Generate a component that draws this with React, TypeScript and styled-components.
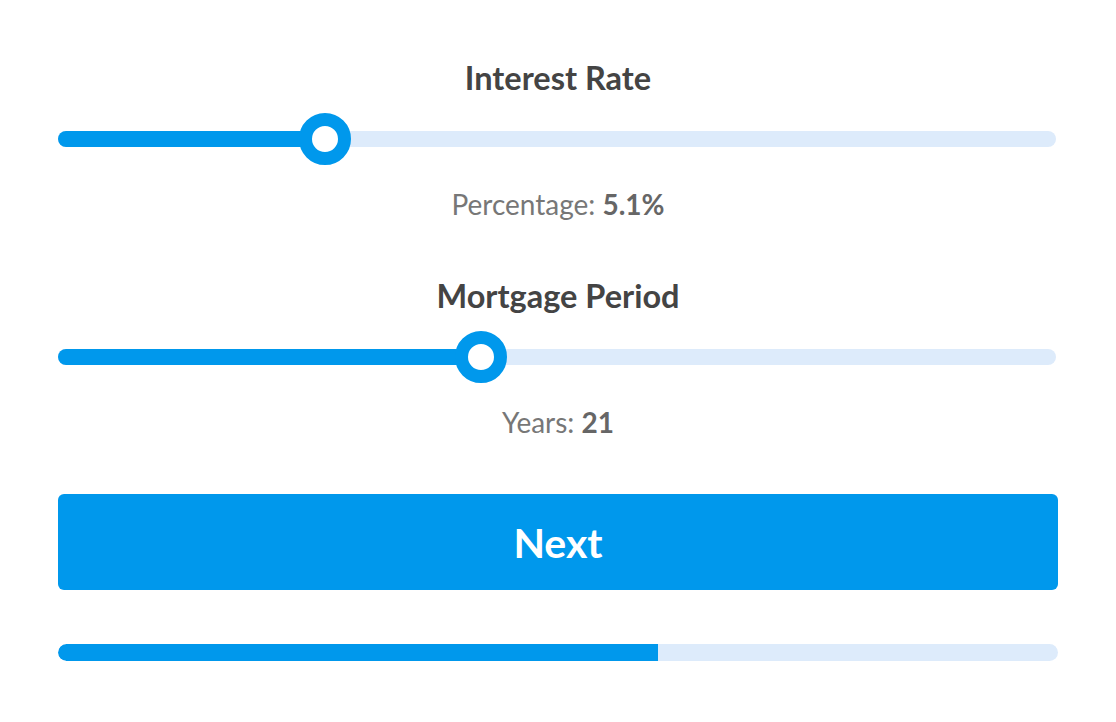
import styled, { createGlobalStyle } from 'styled-components';

const GlobalStyle = createGlobalStyle`
  body {
    margin: 0;
    background: #ffffff;
    font-family: Lato, "Open Sans", sans-serif;
  }
`;

const BLUE = '#0098ec';
const LIGHT = '#ddebfb';

const Page = styled.div`
  width: 1000px;
  margin: 0 auto;
  padding-top: 60px;
  display: flex;
  flex-direction: column;
`;

const Field = styled.section<{ $top?: number }>`
  display: flex;
  flex-direction: column;
  margin-top: ${(p) => p.$top ?? 0}px;
`;

const Title = styled.h2`
  margin: 0;
  text-align: center;
  font-size: 32.5px;
  line-height: 36px;
  font-weight: 700;
  color: #444444;
`;

const Track = styled.div`
  position: relative;
  margin-top: 35px;
  width: 998px;
  height: 16px;
  border-radius: 8px;
  background: ${LIGHT};
`;

const Fill = styled.div`
  height: 100%;
  border-radius: 8px;
  background: ${BLUE};
`;

const Thumb = styled.div`
  position: absolute;
  top: 50%;
  width: 52px;
  height: 52px;
  box-sizing: border-box;
  border-radius: 50%;
  border: 13px solid ${BLUE};
  background: #ffffff;
  transform: translate(-50%, -50%);
`;

const Caption = styled.p`
  margin: 42px 0 0;
  text-align: center;
  font-size: 28px;
  line-height: 30px;
  color: #777777;
  b {
    color: #666666;
    font-weight: 700;
  }
`;

const NextButton = styled.button`
  margin-top: 57px;
  height: 96px;
  width: 100%;
  border: none;
  border-radius: 6px;
  background: ${BLUE};
  color: #ffffff;
  font-family: Lato, "Open Sans", sans-serif;
  font-size: 41px;
  font-weight: 700;
  cursor: pointer;
`;

const Progress = styled.div`
  margin-top: 54px;
  height: 17px;
  border-radius: 9px;
  background: ${LIGHT};
  overflow: hidden;
`;

const ProgressFill = styled.div`
  height: 100%;
  background: ${BLUE};
  border-radius: 9px 0 0 9px;
`;

type SliderProps = { value: number; max: number };

const Slider = ({ value, max }: SliderProps) => {
  const p = value / max;
  const pos = `calc(26px + ${p} * (100% - 52px))`;
  return (
    <Track>
      <Fill style={{ width: pos }} />
      <Thumb style={{ left: pos }} />
    </Track>
  );
};

export default function App() {
  const rate = 5.1;
  const years = 21;
  const step = 0.6;

  return (
    <>
      <GlobalStyle />
      <Page>
        <Field>
          <Title>Interest Rate</Title>
          <Slider value={rate} max={20} />
          <Caption>
            Percentage: <b>{rate}%</b>
          </Caption>
        </Field>
        <Field $top={59}>
          <Title>Mortgage Period</Title>
          <Slider value={years} max={50} />
          <Caption>
            Years: <b>{years}</b>
          </Caption>
        </Field>
        <NextButton>Next</NextButton>
        <Progress>
          <ProgressFill style={{ width: `${step * 100}%` }} />
        </Progress>
      </Page>
    </>
  );
}
